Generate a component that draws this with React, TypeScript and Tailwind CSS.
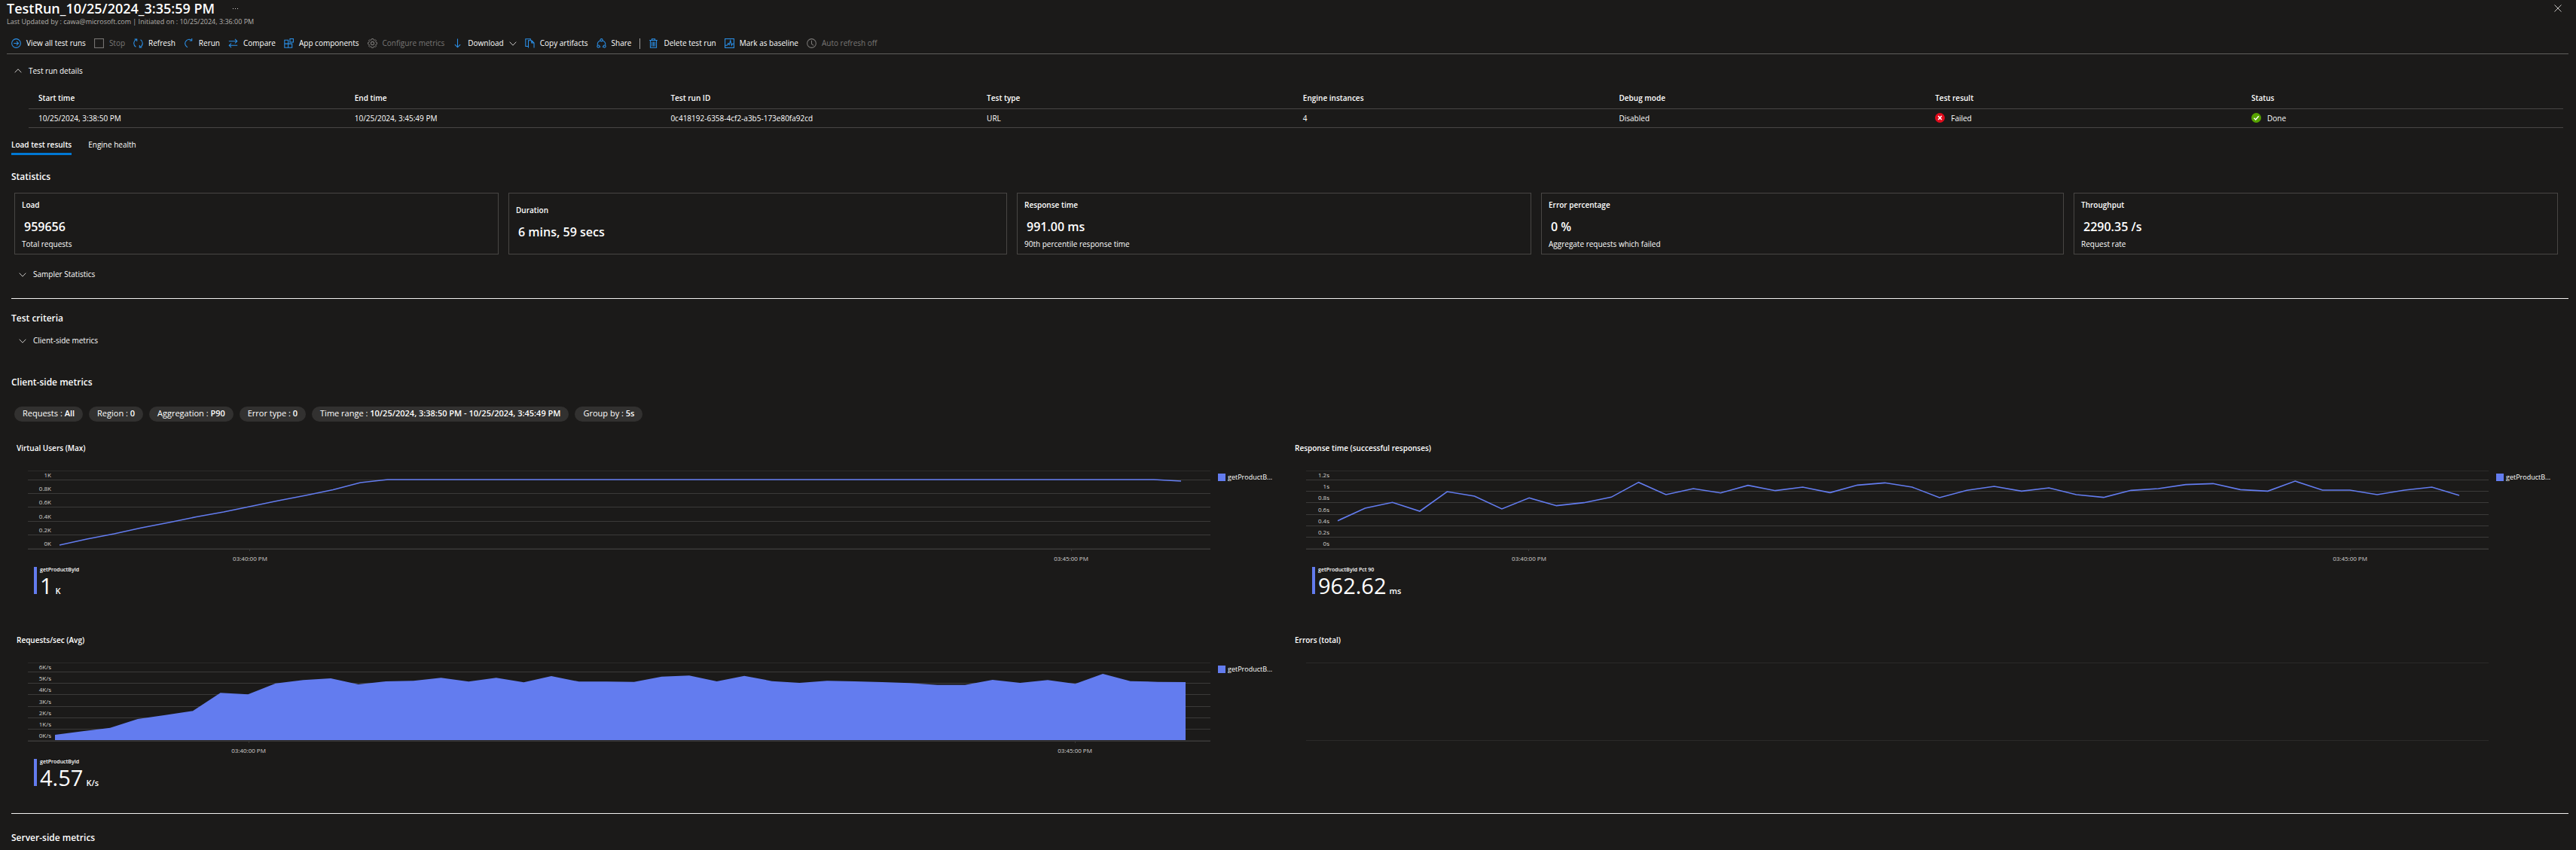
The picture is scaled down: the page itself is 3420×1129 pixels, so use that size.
import type { ReactNode } from "react";

type IconName =
  | "go" | "stop" | "refresh" | "rerun" | "compare" | "apps" | "gear"
  | "download" | "copy" | "share" | "trash" | "baseline" | "clock";

const shapes: Record<IconName, ReactNode> = {
  go: (
    <>
      <circle cx="8" cy="8" r="7.2" />
      <path d="M4 8h7.5M8.5 4.8 11.7 8l-3.2 3.2" />
    </>
  ),
  stop: <rect x="0.7" y="0.7" width="14.6" height="14.6" />,
  refresh: (
    <>
      <path d="M5.6 1.4a7 7 0 0 0-1.4 12.5M10.4 14.6a7 7 0 0 0 1.4-12.5" />
      <path d="M2 1.2h3.8V5M14 14.8h-3.8V11" />
    </>
  ),
  rerun: (
    <>
      <path d="M13 3.2A6.6 6.6 0 0 0 3 11.4q.9 1.9 3.2 3.2" />
      <path d="M13.2 0v3.8H9.4" />
    </>
  ),
  compare: (
    <>
      <path d="M1 4.5h13.5M11 1l3.5 3.5L11 8" />
      <path d="M15 11.5H1.5M5 8l-3.5 3.5L5 15" />
    </>
  ),
  apps: (
    <>
      <path d="M1 2.8h6v6h6.2V15H1zM1 8.8h6M7 8.8V15" />
      <rect x="9.8" y="0.7" width="5.5" height="5.5" />
    </>
  ),
  gear: (
    <>
      <circle cx="8" cy="8" r="2.6" />
      <path d="M6.700 1h2.600l.4 2 1.400.6 1.700-1.200 1.800 1.800-1.200 1.700.6 1.400 2 .4v2.600l-2 .4-.6 1.400 1.200 1.700-1.800 1.800-1.700-1.200-1.400.6-.4 2H6.700l-.4-2-1.400-.6-1.700 1.200-1.800-1.800 1.200-1.700-.6-1.400-2-.4V7.700l2-.4.6-1.400-1.200-1.700 1.800-1.800 1.700 1.200 1.400-.6z" transform="translate(.6 -.3) scale(.93)" />
    </>
  ),
  download: <path d="M8 .5v14M3.500 10 8 14.500l4.500-4.500" />,
  copy: (
    <>
      <path d="M5 13H1V1h8v2.200" />
      <path d="M5.500 15.500v-12h5.300l4 4v8M10.800 3.500v4h4" />
    </>
  ),
  share: (
    <>
      <circle cx="8" cy="2.8" r="2" />
      <circle cx="3" cy="13" r="2" />
      <circle cx="13" cy="13" r="2" />
      <path d="M6 3.600a6 6 0 0 0-4.300 7.400M10 3.600a6 6 0 0 1 4.300 7.400M5 13.800h1.500M11 13.800H9.500" />
    </>
  ),
  trash: (
    <>
      <path d="M1.500 3h13M5.500 3V1h5v2M3 3v12h10V3" />
      <path d="M5.700 5.500v7.500M8 5.500v7.500M10.300 5.500v7.500" />
    </>
  ),
  baseline: (
    <>
      <rect x="0.7" y="0.7" width="14.6" height="14.6" />
      <path d="M1 11.500h3l2-3.500 1.500 2.500L9.500 3.500l2 8 1-2.500H15" />
    </>
  ),
  clock: (
    <>
      <circle cx="8" cy="8" r="7.2" />
      <path d="M8 3.500V9l3.300 2.600" />
    </>
  ),
};

function Icon({ name }: { name: IconName }) {
  return (
    <svg viewBox="0 0 16 16" className="size-[13px] shrink-0" fill="none" stroke="currentColor" strokeWidth="1.3" aria-hidden="true">
      {shapes[name]}
    </svg>
  );
}

function Chevron({ up = false }: { up?: boolean }) {
  return (
    <svg viewBox="0 0 10 6" className="h-[6px] w-[10px] shrink-0" fill="none" stroke="#c8c6c4" strokeWidth="1" aria-hidden="true">
      <path d={up ? "M.7 5.300 5 .8l4.300 4.500" : "M.7.7 5 5.200 9.300.7"} />
    </svg>
  );
}

function Command({ icon, children, disabled = false, menu = false }: { icon: IconName; children: ReactNode; disabled?: boolean; menu?: boolean }) {
  return (
    <button type="button" disabled={disabled} className="flex items-center gap-[7px] text-[#2b91ea] disabled:text-[#797775]">
      <Icon name={icon} />
      <span className={disabled ? "text-[#797775]" : "text-white"}>{children}</span>
      {menu && <Chevron />}
    </button>
  );
}

const runDetails: { head: string; cell: ReactNode }[] = [
  { head: "Start time", cell: "10/25/2024, 3:38:50 PM" },
  { head: "End time", cell: "10/25/2024, 3:45:49 PM" },
  { head: "Test run ID", cell: "0c418192-6358-4cf2-a3b5-173e80fa92cd" },
  { head: "Test type", cell: "URL" },
  { head: "Engine instances", cell: "4" },
  { head: "Debug mode", cell: "Disabled" },
  {
    head: "Test result",
    cell: (
      <span className="flex items-center gap-2">
        <svg viewBox="0 0 13 13" className="size-[13px]" aria-hidden="true">
          <circle cx="6.5" cy="6.5" r="6.5" fill="#e00b1c" />
          <path d="m4.200 4 4.600 5M8.800 4 4.200 9" stroke="#fff" strokeWidth="1.6" />
        </svg>
        Failed
      </span>
    ),
  },
  {
    head: "Status",
    cell: (
      <span className="flex items-center gap-2">
        <svg viewBox="0 0 13 13" className="size-[13px]" aria-hidden="true">
          <circle cx="6.5" cy="6.5" r="6.5" fill="#57a300" />
          <path d="m3.500 6.800 2.200 2.200 4-4.800" fill="none" stroke="#fff" strokeWidth="1.5" />
        </svg>
        Done
      </span>
    ),
  },
];

const stats: { label: string; value: string; note?: string }[] = [
  { label: "Load", value: "959656", note: "Total requests" },
  { label: "Duration", value: "6 mins, 59 secs" },
  { label: "Response time", value: "991.00 ms", note: "90th percentile response time" },
  { label: "Error percentage", value: "0 %", note: "Aggregate requests which failed" },
  { label: "Throughput", value: "2290.35 /s", note: "Request rate" },
];

const filters = [
  ["Requests", "All"],
  ["Region", "0"],
  ["Aggregation", "P90"],
  ["Error type", "0"],
  ["Time range", "10/25/2024, 3:38:50 PM - 10/25/2024, 3:45:49 PM"],
  ["Group by", "5s"],
];

/* Plot space: 1570 units wide, 105 tall. */
const W = 1570;
const H = 105;

type Axis = { label: string; y: number };
type Tick = { label: string; x: number };
type Series = {
  kind: "line" | "area";
  x0: number;
  x1: number;
  ys: number[];
  axis: Axis[];
  ticks: Tick[];
  metric: string;
  value: string;
  unit: string;
};

const sevenRows = [12, 27, 42, 58, 73, 88, 103];
const axisOf = (labels: string[], rows: number[]): Axis[] => labels.map((label, i) => ({ label, y: rows[i] }));
const ticksAt = (a: number, b: number): Tick[] => [
  { label: "03:40:00 PM", x: a },
  { label: "03:45:00 PM", x: b },
];

const users: Series = {
  kind: "line",
  x0: 42,
  x1: 1531,
  ys: [99, 91, 84, 76, 69, 61.5, 55, 47.5, 40, 33, 25.5, 16, 12, ...Array(28).fill(12), 14],
  axis: axisOf(["1K", "0.8K", "0.6K", "0.4K", "0.2K", "0K"], [12, 30, 48, 67, 85, 103]),
  ticks: ticksAt(295, 1385),
  metric: "getProductById",
  value: "1",
  unit: "K",
};

const response: Series = {
  kind: "line",
  x0: 42,
  x1: 1531,
  ys: [
    365, 315, 292, 327, 249, 267, 318, 274, 305, 293, 271, 212, 261, 237, 254, 224, 245, 231, 253, 223, 214, 231,
    273, 244, 228, 247, 234, 261, 272, 244, 237, 221, 217, 241, 247, 207, 243, 243, 261, 243, 231, 264,
  ].map((v) => v / 3 - 55),
  axis: axisOf(["1.2s", "1s", "0.8s", "0.6s", "0.4s", "0.2s", "0s"], sevenRows),
  ticks: ticksAt(296, 1386),
  metric: "getProductById Pct 90",
  value: "962.62",
  unit: "ms",
};

const requests: Series = {
  kind: "area",
  x0: 36,
  x1: 1537,
  ys: [
    465, 451, 437, 402, 386, 370, 298, 304, 260, 247, 240, 264, 252, 250, 238, 253, 238, 256, 231, 253, 253, 254,
    233, 229, 252, 230, 251, 258, 250, 252, 255, 259, 266, 266, 246, 258, 247, 262, 222, 251, 254, 255,
  ].map((v) => v / 3 - 59),
  axis: axisOf(["6K/s", "5K/s", "4K/s", "3K/s", "2K/s", "1K/s", "0K/s"], sevenRows),
  ticks: ticksAt(293, 1390),
  metric: "getProductById",
  value: "4.57",
  unit: "K/s",
};

function Plot({ series }: { series?: Series }) {
  const points = series
    ? series.ys.map((y, i) => `${series.x0 + (i * (series.x1 - series.x0)) / (series.ys.length - 1)},${y}`).join(" ")
    : "";
  return (
    <div className="relative">
      <svg viewBox={`0 0 ${W} ${H}`} preserveAspectRatio="none" className="block h-[105px] w-full" aria-hidden="true">
        <rect x="0" y="0" width={W} height="1" fill="#2b2a29" />
        {series?.axis.slice(0, -1).map((a) => (
          <rect key={a.label} x="0" y={a.y} width={W} height="1" fill="#3b3a39" />
        ))}
        {series?.kind === "line" && (
          <polyline points={points} fill="none" stroke="#637cef" strokeWidth="1.6" vectorEffect="non-scaling-stroke" />
        )}
        {series?.kind === "area" && (
          <polygon points={`${series.x0},103 ${points} ${series.x1},103`} fill="#637cef" />
        )}
        <rect x="0" y="103" width={W} height="1" fill="#2b2a29" />
        {series && <rect x="0" y="104" width={W} height="1" fill="#3b3a39" />}
      </svg>
      {series?.axis.map((a) => (
        <span key={a.label} className="absolute left-0 w-[31px] text-right text-[8px] leading-[12px] text-[#d2d0ce]" style={{ top: a.y - 12 }}>
          {a.label}
        </span>
      ))}
    </div>
  );
}

function Chart({ title, series }: { title: string; series?: Series }) {
  return (
    <section>
      <h3 className="text-[10px] leading-4 font-semibold">{title}</h3>
      <div className="mt-[22px] flex pl-[15px]">
        <div className="min-w-0 flex-1">
          <Plot series={series} />
          <div className="relative h-[18px]">
            {series?.ticks.map((t) => (
              <div key={t.label} className="absolute top-0 flex w-20 -translate-x-1/2 flex-col items-center" style={{ left: `${(t.x / W) * 100}%` }}>
                <i className="h-[2px] w-px bg-[#3b3a39]" />
                <span className="mt-1 text-[8px] leading-[12px] whitespace-nowrap text-[#d2d0ce]">{t.label}</span>
              </div>
            ))}
          </div>
        </div>
        <div className="w-[90px] shrink-0 pl-[10px]">
          {series && (
            <div className="mt-[3px] flex items-center gap-[3px] text-[9px] leading-[12px]">
              <i className="size-[10px] bg-[#637cef]" />
              getProductB...
            </div>
          )}
        </div>
      </div>
      {series && (
        <div className="mt-[5px] ml-[23px] flex gap-1">
          <i className="h-9 w-1 bg-[#637cef]" />
          <div>
            <div className="text-[7px] leading-[8px] font-semibold">{series.metric}</div>
            <div className="mt-[3px] flex items-baseline gap-1 text-[29px] leading-[28px] font-medium text-white">
              {series.value}
              <span className="text-[11px] leading-none font-semibold">{series.unit}</span>
            </div>
          </div>
        </div>
      )}
    </section>
  );
}

function Section({ children }: { children: ReactNode }) {
  return (
    <button type="button" className="flex h-5 items-center gap-[9px] text-[10px]">
      <Chevron />
      {children}
    </button>
  );
}

export default function App() {
  return (
    <div className="min-h-screen bg-[#1b1a19] pr-[10px] pb-[9px] font-['Open_Sans','Noto_Sans',sans-serif] text-[10px] text-white">
      <header className="pl-[9px]">
        <div className="flex h-[22px] items-center">
          <h1 className="text-[18px] leading-[22px] font-semibold text-white">TestRun_10/25/2024_3:35:59 PM</h1>
          <button type="button" aria-label="More" className="ml-[24px] flex gap-[2px] text-[#d2d0ce]">
            <i className="size-px bg-current" />
            <i className="size-px bg-current" />
            <i className="size-px bg-current" />
          </button>
          <button type="button" aria-label="Close" className="mr-[9px] ml-auto">
            <svg viewBox="0 0 10 10" className="size-[10px]" fill="none" stroke="#c8c6c4" strokeWidth="1" aria-hidden="true">
              <path d="m.5.500 9 9M9.500.500l-9 9" />
            </svg>
          </button>
        </div>
        <p className="text-[9px] leading-[13px] text-[#b3b0ad]">
          Last Updated by : cawa@microsoft.com | Initiated on : 10/25/2024, 3:36:00 PM
        </p>
        <div role="toolbar" className="mt-[9px] flex h-7 items-center gap-[11px] border-b border-[#605e5c] pl-[6px]">
          <Command icon="go">View all test runs</Command>
          <Command icon="stop" disabled>Stop</Command>
          <Command icon="refresh">Refresh</Command>
          <Command icon="rerun">Rerun</Command>
          <Command icon="compare">Compare</Command>
          <Command icon="apps">App components</Command>
          <Command icon="gear" disabled>Configure metrics</Command>
          <Command icon="download" menu>Download</Command>
          <Command icon="copy">Copy artifacts</Command>
          <Command icon="share">Share</Command>
          <i className="h-[14px] w-px bg-[#a19f9d]" />
          <Command icon="trash">Delete test run</Command>
          <Command icon="baseline">Mark as baseline</Command>
          <Command icon="clock" disabled>Auto refresh off</Command>
        </div>
      </header>

      <main className="pl-[15px]">
        <button type="button" className="mt-3 ml-1 flex h-5 items-center gap-[9px]">
          <Chevron up />
          Test run details
        </button>
        <div className="mt-3 pr-[7px] pl-[23px]">
          <table className="w-full table-fixed border-collapse text-left">
            <thead>
              <tr className="h-7 border-b border-[#484644]">
                {runDetails.map((d) => (
                  <th key={d.head} scope="col" className="p-0 pl-[13px] leading-4 font-semibold last:w-[427px]">{d.head}</th>
                ))}
              </tr>
            </thead>
            <tbody>
              <tr className="h-[25px] border-b border-[#484644]">
                {runDetails.map((d) => (
                  <td key={d.head} className="p-0 pl-[13px] leading-4">{d.cell}</td>
                ))}
              </tr>
            </tbody>
          </table>
        </div>

        <div role="tablist" className="mt-3 flex gap-[22px]">
          <button type="button" role="tab" aria-selected="true" className="h-6 border-b-[3px] border-[#0078d4] font-semibold">
            Load test results
          </button>
          <button type="button" role="tab" aria-selected="false" className="h-6 border-b-[3px] border-transparent">
            Engine health
          </button>
        </div>

        <h2 className="mt-[21px] text-[12px] leading-4 font-semibold">Statistics</h2>
        <div className="mt-[13px] mr-[14px] ml-1 grid grid-cols-[643fr_662fr_683fr_694fr_643fr] gap-[13px]">
          {stats.map((s) => (
            <div
              key={s.label}
              className={`flex h-[82px] flex-col justify-center border border-[#484644] px-[9px] ${s.note ? "pt-[2px]" : "pb-[2px]"}`}
            >
              <div className="leading-4 font-semibold">{s.label}</div>
              <div className="mt-[9px] pl-[3px] text-[16px] leading-6 font-semibold">{s.value}</div>
              {s.note && <div className="mt-[3px] leading-4">{s.note}</div>}
            </div>
          ))}
        </div>
        <div className="mt-[17px] ml-[10px]">
          <Section>Sampler Statistics</Section>
        </div>
        <hr className="mt-[21px] border-[#f3f2f1]" />

        <h2 className="mt-[18px] text-[12px] leading-4 font-semibold">Test criteria</h2>
        <div className="mt-3 ml-[10px]">
          <Section>Client-side metrics</Section>
        </div>

        <h2 className="mt-[37px] text-[12px] leading-4 font-semibold">Client-side metrics</h2>
        <div className="mt-6 ml-1 flex gap-2">
          {filters.map(([name, value]) => (
            <button key={name} type="button" className="h-5 rounded-full bg-[#323130] px-[11px] text-[11px] whitespace-nowrap">
              {name} : <b className="font-semibold">{value}</b>
            </button>
          ))}
        </div>

        <div className="mt-[27px] mr-4 ml-[7px] grid grid-cols-2 gap-x-[22px] gap-y-[50px]">
          <Chart title="Virtual Users (Max)" series={users} />
          <Chart title="Response time (successful responses)" series={response} />
          <Chart title="Requests/sec (Avg)" series={requests} />
          <Chart title="Errors (total)" />
        </div>

        <hr className="mt-[33px] border-[#f3f2f1]" />
        <h2 className="mt-6 text-[12px] leading-4 font-semibold">Server-side metrics</h2>
      </main>
    </div>
  );
}
